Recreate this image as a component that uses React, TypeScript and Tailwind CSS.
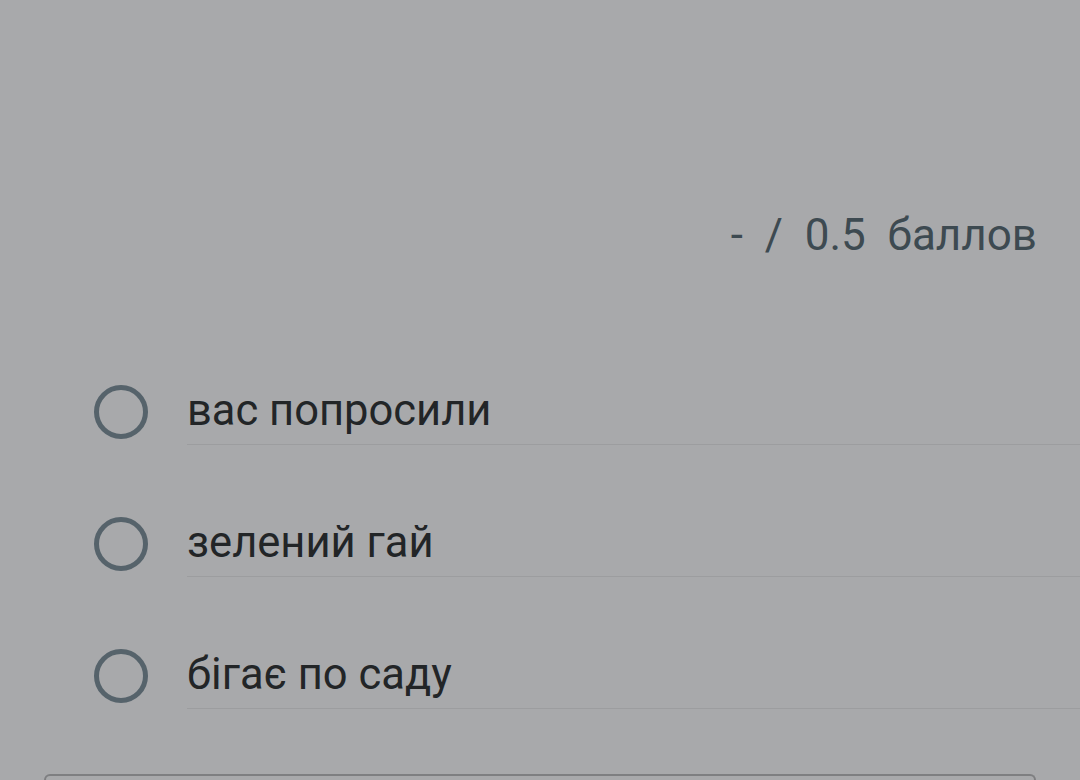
import React from "react";

const options = ["вас попросили", "зелений гай", "бігає по саду"];

export default function App() {
  return (
    <div
      className="w-[1080px] h-[780px] bg-[#a8a9ab] overflow-hidden flex flex-col"
      style={{ fontFamily: "Roboto, 'Noto Sans', sans-serif" }}
    >
      <div className="pt-[213px] pr-[43px] flex justify-end">
        <div className="text-[44px] leading-none text-[#3d4a51] whitespace-pre">
          -  /  0.5  баллов
        </div>
      </div>
      <div className="mt-[121px] flex flex-col gap-[65px]">
        {options.map((o) => (
          <div key={o} className="flex items-stretch h-[67px]">
            <div className="w-[187px] flex items-center pl-[94px]">
              <div className="w-[54px] h-[54px] rounded-full border-[5px] border-[#56636b]" />
            </div>
            <div className="flex-1 flex items-center border-b border-[#9c9d9f] text-[43.5px] leading-none text-[#222527]">
              {o}
            </div>
          </div>
        ))}
      </div>
      <div className="mt-auto mx-[44px] h-[6px] rounded-t-[6px] border-t-2 border-x-2 border-[#7e7f81]" />
    </div>
  );
}
